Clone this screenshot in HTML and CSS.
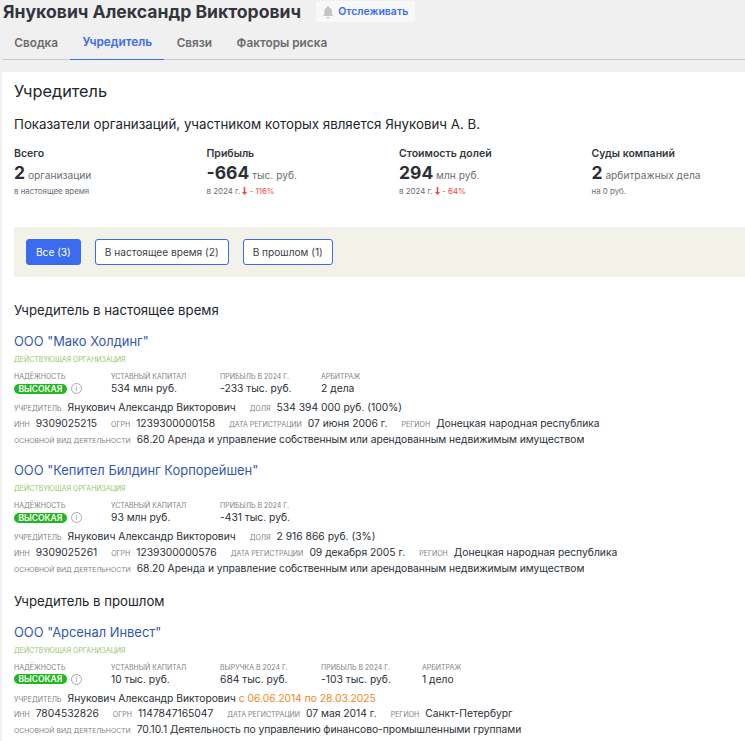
FILE: index.html
```html
<!DOCTYPE html>
<html lang="ru">
<head>
<meta charset="utf-8">
<title>Янукович Александр Викторович</title>
<link rel="stylesheet" href="styles.css">
</head>
<body>
<header class="head">
  <h1 class="name">Янукович Александр Викторович</h1>
  <button class="track">
    <svg class="bell" width="14" height="14" viewBox="0 0 14 14"><path d="M7 1a1 1 0 0 1 1 1v.5c2 .5 3 2 3 4v3l1.300 1.500H2L3.300 9.500v-3c0-2 1-3.500 2.700-4V2a1 1 0 0 1 1-1zM5.500 12h3a1.500 1.500 0 0 1-3 0z" fill="#c4c4c4"/></svg>
    Отслеживать
  </button>
</header>
<nav class="tabs">
  <a class="tab">Сводка</a>
  <a class="tab active">Учредитель</a>
  <a class="tab">Связи</a>
  <a class="tab">Факторы риска</a>
</nav>
<main class="panel">
  <h2 class="title">Учредитель</h2>
  <p class="subtitle">Показатели организаций, участником которых является Янукович А. В.</p>
  <section class="stats">
    <div class="stat">
      <div class="stat-label">Всего</div>
      <div class="stat-value"><b>2</b> организации</div>
      <div class="stat-note">в настоящее время</div>
    </div>
    <div class="stat">
      <div class="stat-label">Прибыль</div>
      <div class="stat-value"><b>-664</b> тыс. руб.</div>
      <div class="stat-note">в 2024 г. <svg class="arrow" width="5" height="8" viewBox="0 0 5 8"><path d="M1.700 0h1.600v5H5L2.500 8 0 5h1.700z" fill="#f2473f"/></svg> <span class="down">- 116%</span></div>
    </div>
    <div class="stat">
      <div class="stat-label">Стоимость долей</div>
      <div class="stat-value"><b>294</b> млн руб.</div>
      <div class="stat-note">в 2024 г. <svg class="arrow" width="5" height="8" viewBox="0 0 5 8"><path d="M1.700 0h1.600v5H5L2.500 8 0 5h1.700z" fill="#f2473f"/></svg> <span class="down">- 64%</span></div>
    </div>
    <div class="stat">
      <div class="stat-label">Суды компаний</div>
      <div class="stat-value"><b>2</b> арбитражных дела</div>
      <div class="stat-note">на 0 руб.</div>
    </div>
  </section>
  <div class="filters">
    <button class="filter on">Все (3)</button>
    <button class="filter">В настоящее время (2)</button>
    <button class="filter">В прошлом (1)</button>
  </div>

  <h3 class="section first">Учредитель в настоящее время</h3>

  <article class="org">
    <a class="org-name">ООО "Мако Холдинг"</a>
    <div class="org-status">ДЕЙСТВУЮЩАЯ ОРГАНИЗАЦИЯ</div>
    <div class="metrics">
      <div class="metric m1"><span class="lbl">НАДЁЖНОСТЬ</span><div class="rel"><span class="badge">ВЫСОКАЯ</span><span class="info">i</span></div></div>
      <div class="metric m2"><span class="lbl">УСТАВНЫЙ КАПИТАЛ</span><span class="val">534 млн руб.</span></div>
      <div class="metric m3"><span class="lbl">ПРИБЫЛЬ В 2024 Г.</span><span class="val">-233 тыс. руб.</span></div>
      <div class="metric"><span class="lbl">АРБИТРАЖ</span><span class="val">2 дела</span></div>
    </div>
    <div class="line"><span class="lbl">УЧРЕДИТЕЛЬ</span><span class="val">Янукович Александр Викторович</span><span class="lbl gap">ДОЛЯ</span><span class="val">534 394 000 руб. (100%)</span></div>
    <div class="line"><span class="lbl">ИНН</span><span class="val">9309025215</span><span class="lbl gap">ОГРН</span><span class="val">1239300000158</span><span class="lbl gap">ДАТА РЕГИСТРАЦИИ</span><span class="val">07 июня 2006 г.</span><span class="lbl gap">РЕГИОН</span><span class="val">Донецкая народная республика</span></div>
    <div class="line"><span class="lbl long">ОСНОВНОЙ ВИД ДЕЯТЕЛЬНОСТИ</span><span class="val long">68.20 Аренда и управление собственным или арендованным недвижимым имуществом</span></div>
  </article>

  <article class="org">
    <a class="org-name">ООО "Кепител Билдинг Корпорейшен"</a>
    <div class="org-status">ДЕЙСТВУЮЩАЯ ОРГАНИЗАЦИЯ</div>
    <div class="metrics">
      <div class="metric m1"><span class="lbl">НАДЁЖНОСТЬ</span><div class="rel"><span class="badge">ВЫСОКАЯ</span><span class="info">i</span></div></div>
      <div class="metric m2"><span class="lbl">УСТАВНЫЙ КАПИТАЛ</span><span class="val">93 млн руб.</span></div>
      <div class="metric m3"><span class="lbl">ПРИБЫЛЬ В 2024 Г.</span><span class="val">-431 тыс. руб.</span></div>
    </div>
    <div class="line"><span class="lbl">УЧРЕДИТЕЛЬ</span><span class="val">Янукович Александр Викторович</span><span class="lbl gap">ДОЛЯ</span><span class="val">2 916 866 руб. (3%)</span></div>
    <div class="line"><span class="lbl">ИНН</span><span class="val">9309025261</span><span class="lbl gap">ОГРН</span><span class="val">1239300000576</span><span class="lbl gap">ДАТА РЕГИСТРАЦИИ</span><span class="val">09 декабря 2005 г.</span><span class="lbl gap">РЕГИОН</span><span class="val">Донецкая народная республика</span></div>
    <div class="line"><span class="lbl long">ОСНОВНОЙ ВИД ДЕЯТЕЛЬНОСТИ</span><span class="val long">68.20 Аренда и управление собственным или арендованным недвижимым имуществом</span></div>
  </article>

  <h3 class="section">Учредитель в прошлом</h3>

  <article class="org">
    <a class="org-name">ООО "Арсенал Инвест"</a>
    <div class="org-status">ДЕЙСТВУЮЩАЯ ОРГАНИЗАЦИЯ</div>
    <div class="metrics">
      <div class="metric m1"><span class="lbl">НАДЁЖНОСТЬ</span><div class="rel"><span class="badge">ВЫСОКАЯ</span><span class="info">i</span></div></div>
      <div class="metric m2"><span class="lbl">УСТАВНЫЙ КАПИТАЛ</span><span class="val">10 тыс. руб.</span></div>
      <div class="metric m4"><span class="lbl">ВЫРУЧКА В 2024 Г.</span><span class="val">684 тыс. руб.</span></div>
      <div class="metric m4"><span class="lbl">ПРИБЫЛЬ В 2024 Г.</span><span class="val">-103 тыс. руб.</span></div>
      <div class="metric"><span class="lbl">АРБИТРАЖ</span><span class="val">1 дело</span></div>
    </div>
    <div class="line"><span class="lbl">УЧРЕДИТЕЛЬ</span><span class="val">Янукович Александр Викторович <span class="past">с 06.06.2014 по 28.03.2025</span></span></div>
    <div class="line"><span class="lbl">ИНН</span><span class="val">7804532826</span><span class="lbl gap">ОГРН</span><span class="val">1147847165047</span><span class="lbl gap">ДАТА РЕГИСТРАЦИИ</span><span class="val">07 мая 2014 г.</span><span class="lbl gap">РЕГИОН</span><span class="val">Санкт-Петербург</span></div>
    <div class="line"><span class="lbl long">ОСНОВНОЙ ВИД ДЕЯТЕЛЬНОСТИ</span><span class="val long">70.10.1 Деятельность по управлению финансово-промышленными группами</span></div>
  </article>
</main>
</body>
</html>
```
FILE: styles.css
```css
* { box-sizing: border-box; }
html, body { margin: 0; height: 741px; overflow: hidden; }
body {
  background: #f0f0f0;
  font-family: "Inter", "Liberation Sans", sans-serif;
  color: #2b2f36;
}
.head { display: flex; align-items: center; height: 23px; padding-left: 3px; }
.name { margin: 0; font-size: 17.600px; line-height: 23px; font-weight: 700; color: #33373d; white-space: nowrap; }
.track {
  display: flex; align-items: center; gap: 3px;
  margin-left: 15px; height: 21px; width: 99px; padding: 0 0 0 5px;
  border: 0; border-radius: 3px; background: #f8f8f8;
  font: 600 10.500px "Inter", sans-serif; color: #3b6cf0;
}
.tabs { display: flex; margin-left: 2px; height: 37px; width: 743px; border-bottom: 1px solid #c9c9c9; }
.tab { display: flex; align-items: center; height: 37px; padding: 2px 12.250px 0; font-size: 11.800px; font-weight: 600; color: #6b6b6b; white-space: nowrap; }
.tab.active { color: #3b6cf0; border-bottom: 1px solid #3b6cf0; }
.panel { margin: 12px 0 0 2px; padding: 9px 0 0 12px; background: #fff; height: 680px; width: 743px; }
.title { margin: 0; font-size: 16.300px; line-height: 20px; font-weight: 400; color: #22262c; }
.subtitle { margin: 15px 0 0; font-size: 13.300px; line-height: 16px; color: #22262c; }
.stats { display: grid; grid-template-columns: repeat(3, 192.500px) minmax(0, 1fr); margin-top: 15px; height: 62px; }
.stat-label { font-size: 10.500px; line-height: 14px; font-weight: 600; color: #33373d; }
.stat-value { font-size: 10.200px; line-height: 22px; color: #6a6f76; margin-top: 1px; white-space: nowrap; }
.stat-value b { font-size: 17.500px; font-weight: 700; color: #2b2f36; }
.stat-note { font-size: 7.900px; line-height: 11px; color: #6a6f76; white-space: nowrap; }
.arrow { vertical-align: -1px; }
.down { color: #f2473f; }
.filters { display: flex; align-items: center; gap: 14px; height: 50px; margin-top: 18px; padding-left: 12px; background: #f2f2e8; }
.filter {
  height: 26px; padding: 0 9px; border: 1px solid #3b6cf0; border-radius: 3px;
  background: #fff; color: #3d4248; font: 400 10.150px "Inter", sans-serif; white-space: nowrap;
}
.filter.on { background: #3b6cf0; color: #fff; }
.section { margin: 16px 0 0; font-size: 13.200px; line-height: 18px; font-weight: 400; color: #22262c; }
.section.first { margin-top: 24px; }
.org { margin-top: 16px; }
.section + .org { margin-top: 14px; }
.org-name { display: block; font-size: 12.900px; line-height: 18px; color: #3357b5; white-space: nowrap; }
.org-status { margin-top: 4px; font-size: 7px; line-height: 10px; color: #9cc46a; }
.metrics { display: flex; margin-top: 6px; height: 25px; }
.metric { display: flex; flex-direction: column; }
.m1 { width: 97px; }
.m2 { width: 109px; }
.m3 { width: 101px; }
.m4 { width: 101px; }
.metric .lbl { line-height: 12px; margin: 0; }
.metric .val { line-height: 11px; }
.lbl { font-size: 7px; color: #7d8288; white-space: nowrap; margin-right: 6px; }
.lbl.gap { margin-left: 14px; }
.lbl.long { font-size: 6.850px; }
.val { font-size: 10.300px; line-height: 16px; color: #2b2f36; white-space: nowrap; }
.val.long { letter-spacing: -0.050px; }
.rel { display: flex; align-items: center; gap: 4px; height: 11px; }
.badge { height: 10px; padding: 0 4.500px; border-radius: 5px; background: #22b622; color: #fff; font-size: 8.500px; font-weight: 600; line-height: 10px; }
.info { width: 11px; height: 11px; border: 1px solid #aaa; border-radius: 50%; font-size: 7px; line-height: 9px; text-align: center; color: #888; }
.line { display: flex; align-items: baseline; height: 15.750px; }
.metrics + .line { margin-top: 3px; }
.past { color: #ee8a22; }
```
